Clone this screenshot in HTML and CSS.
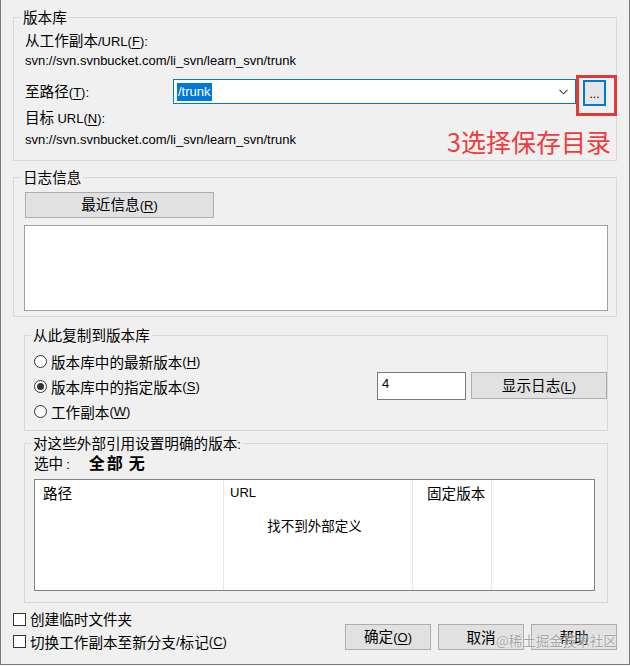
FILE: index.html
```html
<!DOCTYPE html>
<html lang="zh-CN">
<head>
<meta charset="utf-8">
<title>复制(分支/标记)</title>
<link rel="stylesheet" href="styles.css">
</head>
<body>
<div class="window">
  <fieldset class="group g-repo">
    <legend>版本库</legend>
    <div class="line l-from">从工作副本<span class="l">/URL(<u>F</u>):</span></div>
    <div class="line l-url1"><span class="l">svn://svn.svnbucket.com/li_svn/learn_svn/trunk</span></div>
    <div class="path-row">
      <span class="path-label">至路径<span class="l">(<u>T</u>):</span></span>
      <div class="combo">
        <span class="sel l">/trunk</span>
        <svg class="chev" width="9" height="6" viewBox="0 0 9 6"><path d="M0.5 0.8 L4.5 4.8 L8.5 0.8" fill="none" stroke="#444" stroke-width="1.1"/></svg>
      </div>
      <div class="browse-wrap">
        <button class="browse">...</button>
        <div class="redbox"></div>
        <div class="note">3选择保存目录</div>
      </div>
    </div>
    <div class="line l-target">目标 <span class="l">URL(<u>N</u>):</span></div>
    <div class="line l-url2"><span class="l">svn://svn.svnbucket.com/li_svn/learn_svn/trunk</span></div>
  </fieldset>

  <fieldset class="group g-log">
    <legend>日志信息</legend>
    <button class="btn recent">最近信息<span class="l">(<u>R</u>)</span></button>
    <div class="logbox"></div>
  </fieldset>

  <div class="inner-groups">
    <fieldset class="group g-copy">
      <legend>从此复制到版本库</legend>
      <div class="copy-body">
        <div class="radios">
          <div class="radio-row"><span class="radio"></span>版本库中的最新版本<span class="l">(<u>H</u>)</span></div>
          <div class="radio-row"><span class="radio on"></span>版本库中的指定版本<span class="l">(<u>S</u>)</span></div>
          <div class="radio-row"><span class="radio"></span>工作副本<span class="l">(<u>W</u>)</span></div>
        </div>
        <div class="rev">
          <div class="rev-input l">4</div>
          <button class="btn showlog">显示日志<span class="l">(<u>L</u>)</span></button>
        </div>
      </div>
    </fieldset>

    <fieldset class="group g-ext">
      <legend>对这些外部引用设置明确的版本<span class="l">:</span></legend>
      <div class="select-row">选中<span class="l colon">:</span><b class="all">全部</b><b class="none">无</b></div>
      <div class="list">
        <div class="col c1">路径</div>
        <div class="col c2 l">URL</div>
        <div class="col c3">固定版本</div>
        <div class="col c4"></div>
        <div class="empty">找不到外部定义</div>
      </div>
    </fieldset>
  </div>

  <div class="bottom">
    <div class="checks">
      <div class="check-row"><span class="check"></span>创建临时文件夹</div>
      <div class="check-row"><span class="check"></span>切换工作副本至新分支<span class="l">/</span>标记<span class="l">(<u>C</u>)</span></div>
    </div>
    <div class="buttons">
      <button class="btn dlg">确定<span class="l">(<u>O</u>)</span></button>
      <button class="btn dlg">取消</button>
      <button class="btn dlg">帮助</button>
    </div>
  </div>
  <div class="watermark">@稀土掘金技术社区</div>
</div>
</body>
</html>
```

FILE: styles.css
```css
* { box-sizing: border-box; }

html, body {
  margin: 0;
  padding: 0;
  background: #f0f0f0;
}

body {
  font-family: "Noto Sans CJK SC", "Noto Sans", sans-serif;
  font-size: 14.6px;
  color: #000;
}

.l {
  font-family: "Liberation Sans", "Noto Sans", sans-serif;
  font-size: 13px;
}

.window {
  position: relative;
  width: 630px;
  height: 665px;
  padding: 7px 12px 0 12px;
  border-left: 1px solid #7a7a7a;
  border-right: 1px solid #7a7a7a;
  border-bottom: 1px solid #7a7a7a;
  overflow: hidden;
}

u { text-decoration: underline; text-underline-offset: 2px; }

.group {
  margin: 0;
  min-width: 0;
  border: 1px solid #d9d9d9;
  padding: 0;
}

.group > legend {
  height: 20px;
  line-height: 20px;
  padding: 0 2px;
  color: #000;
}

/* group 1 */
.g-repo {
  padding: 3px 0 12px 11px;
}
.g-repo > legend { margin-left: -4px; }

.line { white-space: nowrap; }
.l-from { height: 19px; line-height: 19px; }
.l-url1 { height: 20px; line-height: 20px; }
.path-row {
  margin-top: 10px;
  height: 25px;
  display: flex;
  align-items: flex-start;
}
.path-label {
  width: 148px;
  line-height: 24px;
  white-space: nowrap;
}
.combo {
  width: 403px;
  height: 25px;
  background: #fff;
  border: 1px solid #0078d7;
  display: flex;
  align-items: center;
  justify-content: space-between;
  padding: 0 7px 0 3px;
}
.sel {
  background: #0078d7;
  color: #fff;
  line-height: 18px;
  padding: 0 1px;
}
.chev { margin-top: 1px; }
.browse-wrap {
  position: relative;
  margin-left: 7px;
  margin-top: 1px;
}
.browse {
  width: 23px;
  height: 26px;
  padding: 0 0 4px 0;
  border: 2px solid #0078d7;
  background: #e5e5e5;
  font-family: "Liberation Sans", sans-serif;
  font-size: 12px;
  line-height: 12px;
  color: #000;
  display: flex;
  align-items: flex-end;
  justify-content: center;
}
.redbox {
  position: absolute;
  left: -7px;
  top: -5px;
  width: 41px;
  height: 41px;
  border: 3px solid #e53935;
}
.note {
  position: absolute;
  left: -136px;
  top: 46px;
  white-space: nowrap;
  font-size: 25px;
  line-height: 30px;
  color: #ef3b3b;
}
.l-target { margin-top: 2px; height: 21px; line-height: 21px; }
.l-url2 { height: 21px; line-height: 21px; }

/* group 2 */
.g-log {
  margin-top: 6px;
  padding: 5px 8px 5px 10px;
}
.g-log > legend { margin-left: -3px; }

.btn {
  font-family: inherit;
  font-size: 14.6px;
  color: #000;
  background: #e1e1e1;
  border: 1px solid #adadad;
  padding: 0;
  line-height: 20px;
  white-space: nowrap;
}
.recent {
  display: block;
  margin-left: 1px;
  width: 189px;
  height: 26px;
}
.logbox {
  margin-top: 7px;
  height: 86px;
  background: #fff;
  border: 1px solid #a0a0a0;
}

/* groups 3 and 4 */
.inner-groups {
  margin-left: 11px;
  width: 584px;
}
.g-copy {
  margin-top: 8px;
  padding: 4px 0 6px 9px;
}
.g-copy > legend,
.g-ext > legend { margin-left: -3px; }

.copy-body {
  display: flex;
  justify-content: space-between;
  align-items: center;
}
.radio-row {
  height: 25px;
  line-height: 20px;
  display: flex;
  align-items: center;
  white-space: nowrap;
}
.radio {
  width: 13px;
  height: 13px;
  border: 1px solid #333;
  border-radius: 50%;
  background: #fff;
  margin-right: 4px;
  display: flex;
  align-items: center;
  justify-content: center;
}
.radio.on::after {
  content: "";
  width: 7px;
  height: 7px;
  border-radius: 50%;
  background: #333;
}
.rev {
  display: flex;
  align-items: center;
  gap: 5px;
  margin-top: -2px;
}
.rev-input {
  width: 89px;
  height: 28px;
  background: #fff;
  border: 1px solid #7a7a7a;
  padding: 1px 0 0 4px;
  line-height: 20px;
}
.showlog {
  width: 136px;
  height: 27px;
}

.g-ext {
  margin-top: 2px;
  padding: 0 12px 11px 9px;
}
.select-row {
  height: 19px;
  line-height: 19px;
  white-space: nowrap;
}
.select-row .colon { margin-left: 3px; }
.select-row b { font-size: 16px; letter-spacing: 2px; line-height: 19px; }
.select-row .all { margin-left: 19px; }
.select-row .none { margin-left: 4px; }

.list {
  margin-top: 7px;
  height: 112px;
  background: #fff;
  border: 1px solid #828282;
  display: grid;
  grid-template-columns: 189px 189px 79px 1fr;
  grid-template-rows: 1fr;
}
.col {
  grid-row: 1;
  border-right: 1px solid #e9e9e9;
  padding-top: 3px;
  line-height: 20px;
  white-space: nowrap;
}
.c1 { grid-column: 1; padding-left: 8px; }
.c2 { grid-column: 2; padding-left: 6px; }
.c3 { grid-column: 3; padding-left: 14px; }
.c4 { grid-column: 4; border-right: none; }
.empty {
  grid-row: 1;
  grid-column: 1 / -1;
  justify-self: center;
  align-self: start;
  margin-top: 35px;
  line-height: 20px;
  font-size: 13.5px;
}

/* bottom */
.bottom {
  margin-top: 5px;
  display: flex;
  justify-content: space-between;
  align-items: flex-start;
}
.check-row {
  height: 22.5px;
  line-height: 20px;
  display: flex;
  align-items: center;
  white-space: nowrap;
}
.check {
  width: 13px;
  height: 13px;
  border: 1px solid #333;
  background: #fff;
  margin-right: 4px;
}
.buttons {
  display: flex;
  gap: 7px;
  margin-top: 16px;
}
.dlg {
  width: 86px;
  height: 26px;
}

.watermark {
  position: absolute;
  left: 495px;
  top: 630px;
  font-size: 13.5px;
  line-height: 20px;
  color: rgba(140, 140, 140, 0.75);
  text-shadow: 0 0 2px #fff;
  white-space: nowrap;
  pointer-events: none;
}
```
